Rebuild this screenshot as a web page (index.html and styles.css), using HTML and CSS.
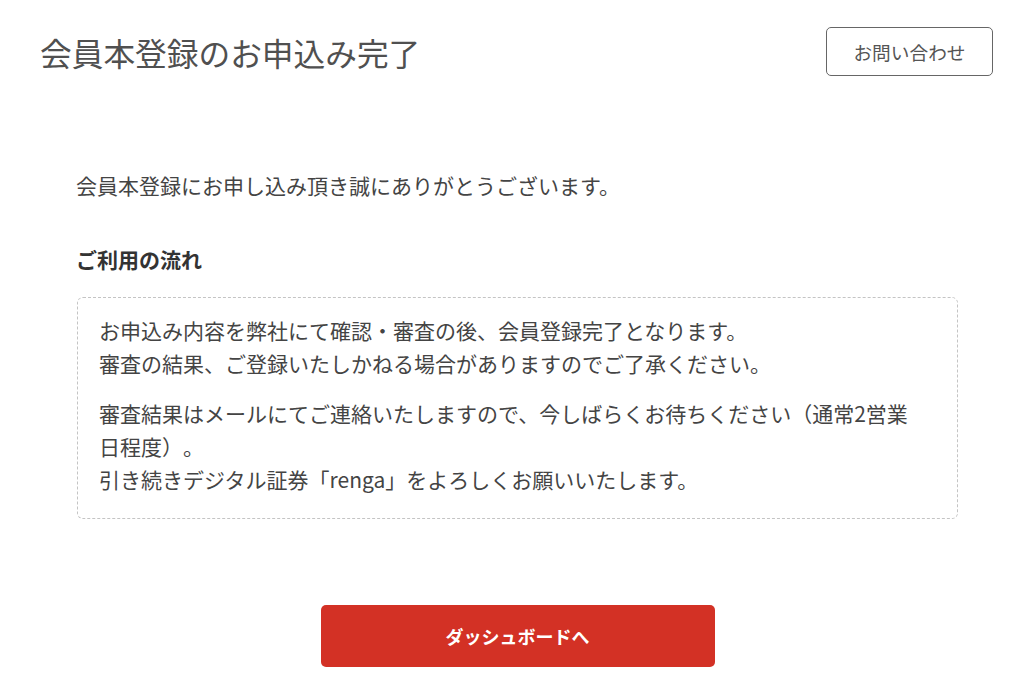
FILE: index.html
```html
<!DOCTYPE html>
<html lang="ja">
<head>
<meta charset="utf-8">
<title>会員本登録のお申込み完了</title>
<link rel="stylesheet" href="styles.css">
</head>
<body>
<header class="page-header">
  <h1 class="page-title">会員本登録のお申込み完了</h1>
  <a class="contact-btn" href="#">お問い合わせ</a>
</header>
<main class="content">
  <p class="lead">会員本登録にお申し込み頂き誠にありがとうございます。</p>
  <h2 class="section-title">ご利用の流れ</h2>
  <div class="flow-box">
    <p class="flow-text">お申込み内容を弊社にて確認・審査の後、会員登録完了となります。<br>審査の結果、ご登録いたしかねる場合がありますのでご了承ください。</p>
    <p class="flow-text">審査結果はメールにてご連絡いたしますので、今しばらくお待ちください（通常2営業日程度）。<br>引き続きデジタル証券「renga」をよろしくお願いいたします。</p>
  </div>
  <div class="actions">
    <a class="primary-btn" href="#">ダッシュボードへ</a>
  </div>
</main>
</body>
</html>
```

FILE: styles.css
```css
* {
  box-sizing: border-box;
}

html, body {
  margin: 0;
  padding: 0;
  background: #ffffff;
}

body {
  font-family: "Noto Sans CJK JP", "Noto Sans", sans-serif;
  color: #444444;
  text-spacing-trim: space-all;
}

.page-header {
  display: flex;
  justify-content: space-between;
  align-items: center;
  padding: 27px 31px 0 40px;
}

.page-title {
  margin: 0;
  font-size: 31.7px;
  font-weight: 400;
  line-height: 44px;
  color: #505050;
}

.contact-btn {
  display: flex;
  align-items: center;
  justify-content: center;
  width: 167px;
  height: 49px;
  border: 1.5px solid #666666;
  border-radius: 5px;
  color: #555555;
  font-size: 18.7px;
  text-decoration: none;
}

.content {
  margin: 0 66px 0 77px;
}

.lead {
  margin: 93px 0 0 -1px;
  font-size: 21px;
  line-height: 33px;
}

.section-title {
  margin: 41px 0 0 -1px;
  font-size: 21px;
  font-weight: 700;
  line-height: 33px;
  color: #333333;
}

.flow-box {
  margin-top: 21px;
  border: 1px dashed #c4c4c4;
  border-radius: 6px;
  padding: 16px 42px 5px 21px;
}

.flow-text {
  margin: 0 0 17px;
  font-size: 21px;
  line-height: 33px;
}

.actions {
  display: flex;
  justify-content: center;
  margin-top: 86px;
}

.primary-btn {
  display: flex;
  align-items: center;
  justify-content: center;
  width: 394px;
  height: 62px;
  background: #d33125;
  border-radius: 5px;
  color: #ffffff;
  font-size: 18px;
  font-weight: 700;
  text-decoration: none;
}
```
